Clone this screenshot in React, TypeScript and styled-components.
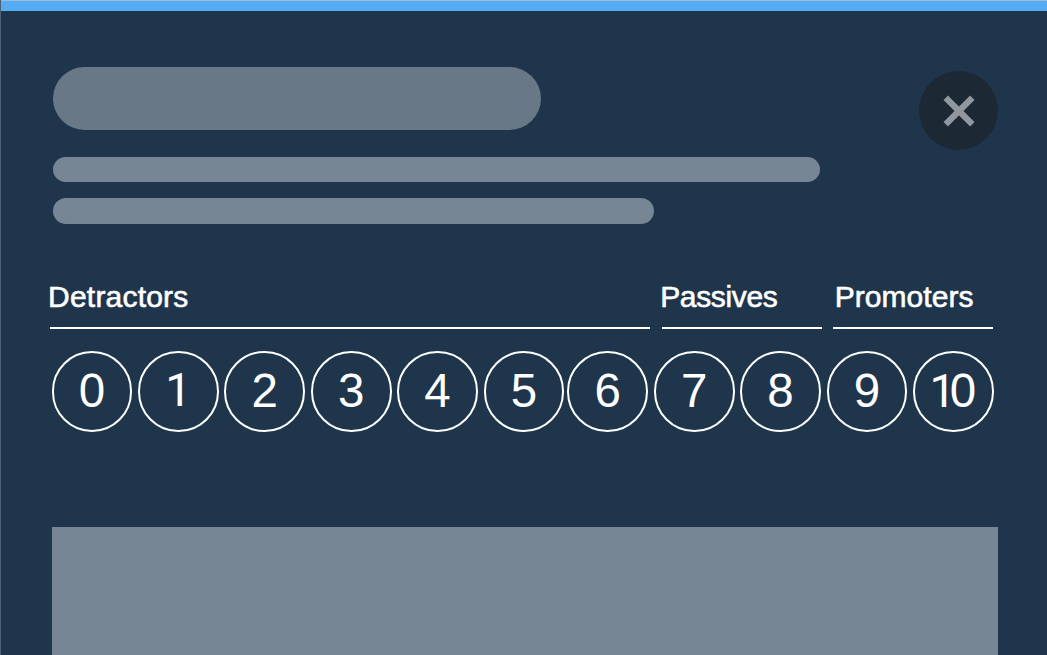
import React from "react";
import styled, { createGlobalStyle } from "styled-components";

const GlobalStyle = createGlobalStyle`
  *, *::before, *::after { box-sizing: border-box; }
  body { margin: 0; background: #1f354c; overflow: hidden; }
`;

const Panel = styled.main`
  display: flex;
  flex-direction: column;
  width: 1047px;
  height: 655px;
  overflow: hidden;
  background: #1f354c;
  border-left: 1px solid #4c6274;
  color: #fff;
  font-family: "Liberation Sans", Arial, sans-serif;
`;

const AccentBar = styled.div`
  flex: none;
  height: 11.3px;
  margin-left: -1px;
  background: #56acf3;
  border-top: 1px solid #9bc0df;
  border-left: 1px solid #559cd3;
`;

const Header = styled.header`
  display: flex;
  justify-content: space-between;
  align-items: flex-start;
  height: 270px;
  padding: 56px 49px 0 52.2px;
`;

const Copy = styled.div`
  display: flex;
  flex-direction: column;
`;

const Placeholder = styled.div<{ $width: number; $height: number; $gap: number; $tone: string }>`
  width: ${(p) => p.$width}px;
  height: ${(p) => p.$height}px;
  margin-bottom: ${(p) => p.$gap}px;
  border-radius: 32px;
  background: ${(p) => p.$tone};
`;

const CloseButton = styled.button`
  display: grid;
  place-items: center;
  width: 79px;
  height: 79px;
  margin-top: 3.7px;
  padding: 1px 0 0;
  border: 0;
  border-radius: 50%;
  background: #1c2834;
`;

const Groups = styled.div`
  display: flex;
  gap: 11.5px;
  height: 48px;
  margin-left: 48.5px;
`;

const Group = styled.div<{ $width: number; $indent: number; $tracking: number }>`
  flex: none;
  width: ${(p) => p.$width}px;
  height: 48px;
  border-bottom: 2px solid #fff;
  font-size: 30px;
  line-height: 32px;
  text-indent: ${(p) => p.$indent}px;
  letter-spacing: ${(p) => p.$tracking}px;
  -webkit-text-stroke: 0.6px #fff;
`;

const Scale = styled.div`
  display: flex;
  gap: 5.7px;
  margin: 22.2px 0 0 50.7px;
`;

const Score = styled.div<{ $pull?: number }>`
  flex: none;
  display: flex;
  justify-content: center;
  width: 80.7px;
  height: 80.7px;
  margin-left: ${(p) => p.$pull ?? 0}px;
  border: 2px solid #fff;
  border-radius: 50%;
  font-size: 47.5px;
  line-height: 75.4px;
`;

const One = styled.span`
  font-family: Roboto, sans-serif;
  font-size: 46.5px;
`;

const Ten = styled.span`
  letter-spacing: -6px;
  white-space: nowrap;
  padding-right: 7px;
`;

const Content = styled.section`
  flex: 1;
  margin: 95px 49px 0 51.4px;
  background: #778695;
`;

const scores = [0, 1, 2, 3, 4, 5, 6, 7, 8, 9];

export default function App() {
  return (
    <>
      <GlobalStyle />
      <Panel>
        <AccentBar />
        <Header>
          <Copy>
            <Placeholder $width={488} $height={62.6} $gap={27} $tone="#697886" />
            <Placeholder $width={767} $height={25} $gap={16.4} $tone="#778695" />
            <Placeholder $width={600.6} $height={25.4} $gap={0} $tone="#778695" />
          </Copy>
          <CloseButton aria-label="Close">
            <svg width="32" height="32" viewBox="0 0 32 32" fill="none">
              <path d="M2.7 2.7 29.3 29.3M29.3 2.7 2.7 29.3" stroke="#90979e" strokeWidth="6.2" />
            </svg>
          </CloseButton>
        </Header>
        <Groups>
          <Group $width={600.5} $indent={-1.4} $tracking={0.2}>Detractors</Group>
          <Group $width={160} $indent={-1.3} $tracking={-0.35}>Passives</Group>
          <Group $width={160} $indent={1.7} $tracking={0.05}>Promoters</Group>
        </Groups>
        <Scale>
          {scores.map((n) => (
            <Score key={n} $pull={n === 6 ? -2.5 : 0}>
              {n === 1 ? <One>1</One> : n}
            </Score>
          ))}
          <Score>
            <Ten>
              <One>1</One>0
            </Ten>
          </Score>
        </Scale>
        <Content />
      </Panel>
    </>
  );
}
